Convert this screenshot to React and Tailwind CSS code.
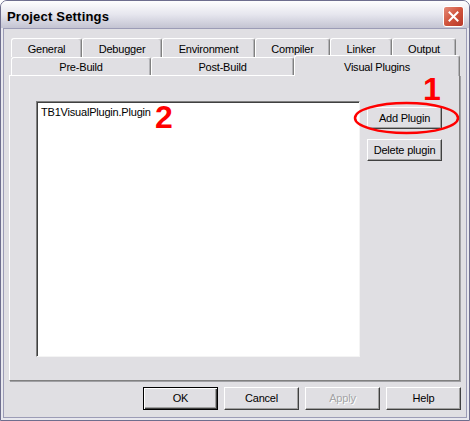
import React from "react";

const rowOne = [
  { label: "General", w: "w-[71px]" },
  { label: "Debugger", w: "w-[80px]" },
  { label: "Environment", w: "w-[93px]" },
  { label: "Compiler", w: "w-[75px]" },
  { label: "Linker", w: "w-[62px]" },
  { label: "Output", w: "w-[64px]" },
];

const tabBase =
  "flex items-center justify-center rounded-t-[3px] border-t border-l border-r border-t-white border-l-white border-r-[#808080] shadow-[inset_-1px_0_0_#b4b4b8]";

function Tab({ label, w }) {
  return <div className={`${tabBase} ${w} h-full pt-[2px]`}>{label}</div>;
}

function Button({ children, isDefault, disabled, w = "w-[75px]", h = "h-[23px]" }) {
  const frame = isDefault
    ? "border border-black shadow-[inset_1px_1px_0_#ffffff,inset_-1px_-1px_0_#404040,inset_-2px_-2px_0_#a0a0a0]"
    : "border border-t-white border-l-white border-r-[#404040] border-b-[#404040] shadow-[inset_-1px_-1px_0_#a0a0a0]";
  return (
    <button
      type="button"
      className={`${w} ${h} ${frame} bg-[#e0dfe3] flex items-center justify-center ${
        disabled ? "text-[#a3a3a6] [text-shadow:1px_1px_0_#ffffff]" : "text-black"
      }`}
    >
      {children}
    </button>
  );
}

export default function App() {
  return (
    <div className="relative w-[470px] h-[421px] font-['Liberation_Sans',Arial,sans-serif] text-[11px] tracking-[-0.2px] text-black select-none">
      <div className="w-full h-full flex flex-col border border-[#6e6e8e] rounded-t-[7px] overflow-hidden bg-[#e8e8ee]">
        {/* title bar */}
        <div className="h-[27px] shrink-0 flex items-center justify-between pl-[6px] pr-[4px] bg-gradient-to-b from-[#fefefe] via-[#e6e6ee] to-[#c4c4d2]">
          <span className="font-bold text-[13px] text-black tracking-[0.2px] [text-shadow:1px_1px_0_#d0d0dc] pt-[5px]">
            Project Settings
          </span>
          <div className="w-[21px] h-[21px] rounded-[3px] border border-white bg-gradient-to-br from-[#e48a78] via-[#d0533c] to-[#b8382a] flex items-center justify-center mt-[3px] mr-[1px]">
            <svg width="11" height="11" viewBox="0 0 11 11">
              <path d="M1.5 1.5 L9.5 9.5 M9.5 1.5 L1.5 9.5" stroke="#ffffff" strokeWidth="2" strokeLinecap="square" />
            </svg>
          </div>
        </div>

        {/* client area */}
        <div className="flex-1 mx-[2px] mb-[2px] border border-[#9c9cb6] bg-[#e0dfe3] pl-[5px] pr-[4px] pt-[9px] flex flex-col">
          {/* tabs */}
          <div className="flex h-[19px] pl-[2px]">
            {rowOne.map((t) => (
              <Tab key={t.label} {...t} />
            ))}
          </div>
          <div className="flex h-[18px] pl-[2px]">
            <Tab label="Pre-Build" w="w-[140px]" />
            <Tab label="Post-Build" w="w-[143px]" />
            <div
              className={`${tabBase} w-[166px] h-[21px] self-end -mb-[1px] relative z-10 bg-[#e0dfe3] items-start pt-[3px]`}
            >
              Visual Plugins
            </div>
          </div>

          {/* panel */}
          <div className="w-[451px] h-[306px] border-t border-l border-t-white border-l-white border-r border-b border-r-[#808080] border-b-[#808080] shadow-[1px_1px_0_#a0a0a4] flex pl-[26px] pt-[25px]">
            <div className="w-[324px] h-[256px] bg-white border border-t-[#808080] border-l-[#808080] border-r-[#f4f4f4] border-b-[#f4f4f4] shadow-[inset_1px_1px_0_#404040] pl-[4px] pt-[2px]">
              TB1VisualPlugin.Plugin
            </div>
            <div className="ml-[7px] mt-[6px] flex flex-col gap-[10px]">
              <Button h="h-[22px]">Add Plugin</Button>
              <Button h="h-[22px]">Delete plugin</Button>
            </div>
          </div>

          {/* dialog buttons */}
          <div className="w-[452px] flex justify-end gap-[6px] mt-[6px]">
            <Button isDefault>OK</Button>
            <Button>Cancel</Button>
            <Button disabled>Apply</Button>
            <Button>Help</Button>
          </div>
        </div>
      </div>

      {/* red annotations */}
      <span className="absolute left-[423px] top-[73px] text-[32px] leading-none font-bold text-[#ff0000]">1</span>
      <span className="absolute left-[155px] top-[101px] text-[32px] leading-none font-bold text-[#ff0000]">2</span>
      <svg className="absolute left-[353px] top-[101px]" width="107" height="34" viewBox="0 0 107 34">
        <ellipse cx="53.5" cy="17" rx="51.5" ry="15" fill="none" stroke="#ff0000" strokeWidth="2.5" />
      </svg>
    </div>
  );
}
